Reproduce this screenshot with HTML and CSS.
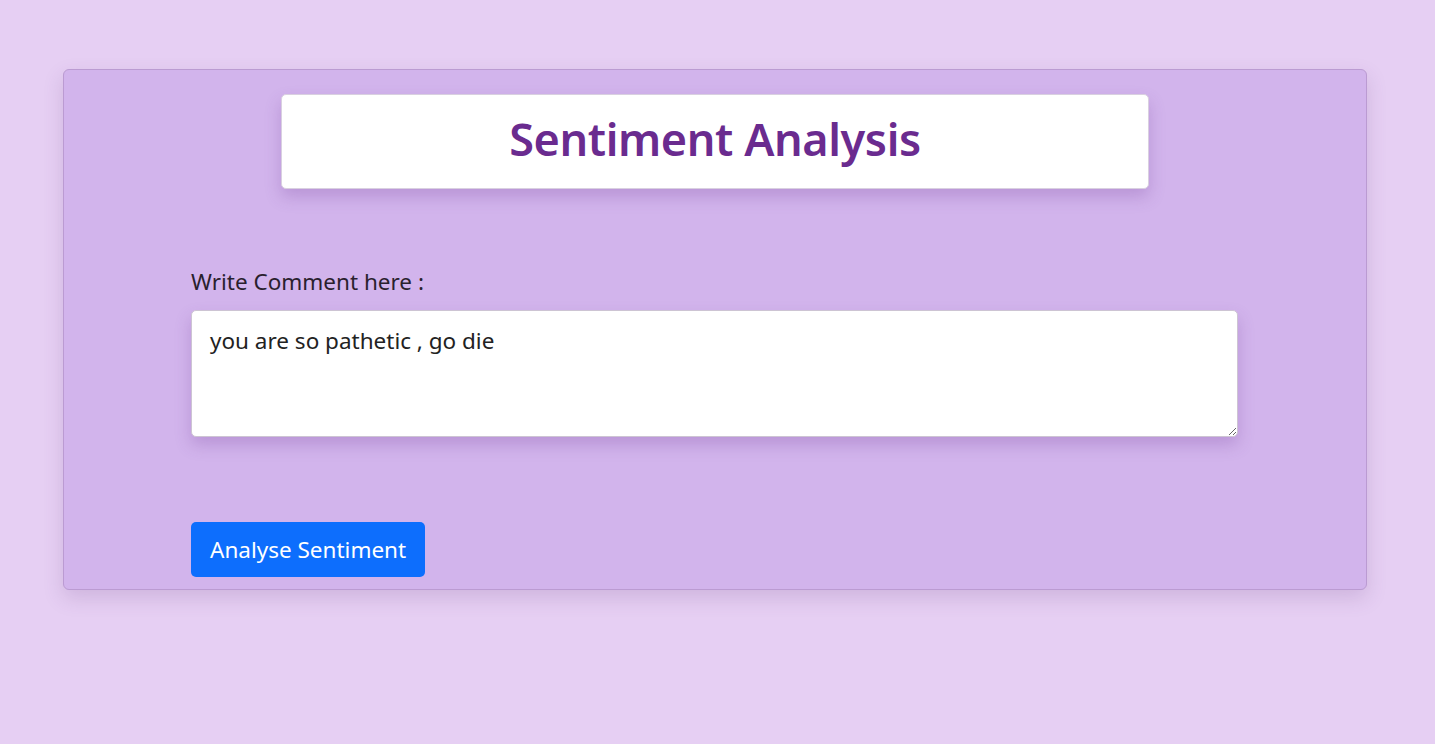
FILE: index.html
```html
<!DOCTYPE html>
<html>
<head>
<meta charset="utf-8">
<link rel="stylesheet" href="styles.css">
</head>
<body>
<div class="page">
  <div class="card">
    <div class="title-box"><h1 class="title">Sentiment Analysis</h1></div>
    <form class="form">
      <label class="label" for="c">Write Comment here :</label>
      <textarea id="c" class="input">you are so pathetic , go die</textarea>
      <button type="button" class="btn">Analyse Sentiment</button>
    </form>
  </div>
</div>
</body>
</html>
```
FILE: styles.css
```css
html, body { margin: 0; padding: 0; }
body {
  background: #e6cff3;
  font-family: "Noto Sans", "Open Sans", sans-serif;
  height: 744px;
  overflow: hidden;
}
.page {
  padding: 69px 68px 0 63px;
}
.card {
  width: 1302px;
  height: 519px;
  background: #d2b4ec;
  border: 1px solid #bb9bd2;
  border-radius: 6px;
  box-shadow: 0 8px 20px rgba(100, 60, 130, 0.18);
  display: flex;
  flex-direction: column;
  align-items: center;
  box-sizing: content-box;
}
.title-box {
  margin-top: 24px;
  width: 866px;
  height: 93px;
  background: #fff;
  border: 1px solid #d9d0e0;
  border-radius: 5px;
  box-shadow: 0 8px 16px rgba(110, 60, 150, 0.25);
  display: flex;
  align-items: center;
  justify-content: center;
}
.title {
  margin: 0 0 6px 0;
  font-size: 45px;
  font-weight: 600;
  color: #6a2b8f;
  line-height: 1;
  letter-spacing: -0.4px;
}
.form {
  width: 1047px;
  display: flex;
  flex-direction: column;
  align-items: flex-start;
  align-self: flex-start;
  margin: 78px 0 0 127px;
}
.label {
  font-size: 22.5px;
  color: #2a1f2e;
  line-height: 30px;
  margin-bottom: 13px;
}
.input {
  width: 1047px;
  height: 127px;
  box-sizing: border-box;
  border: 1px solid #cdc4d3;
  border-radius: 5px;
  background: #fff;
  box-shadow: 0 8px 16px rgba(110, 60, 150, 0.25);
  font-family: inherit;
  font-size: 22.5px;
  color: #222;
  padding: 14px 18px;
  line-height: 32px;
  resize: vertical;
}
.btn {
  margin-top: 85px;
  height: 55px;
  padding: 0 19px;
  background: #0d6efd;
  border: none;
  border-radius: 5px;
  color: #fff;
  font-family: inherit;
  font-size: 22.5px;
}
```
